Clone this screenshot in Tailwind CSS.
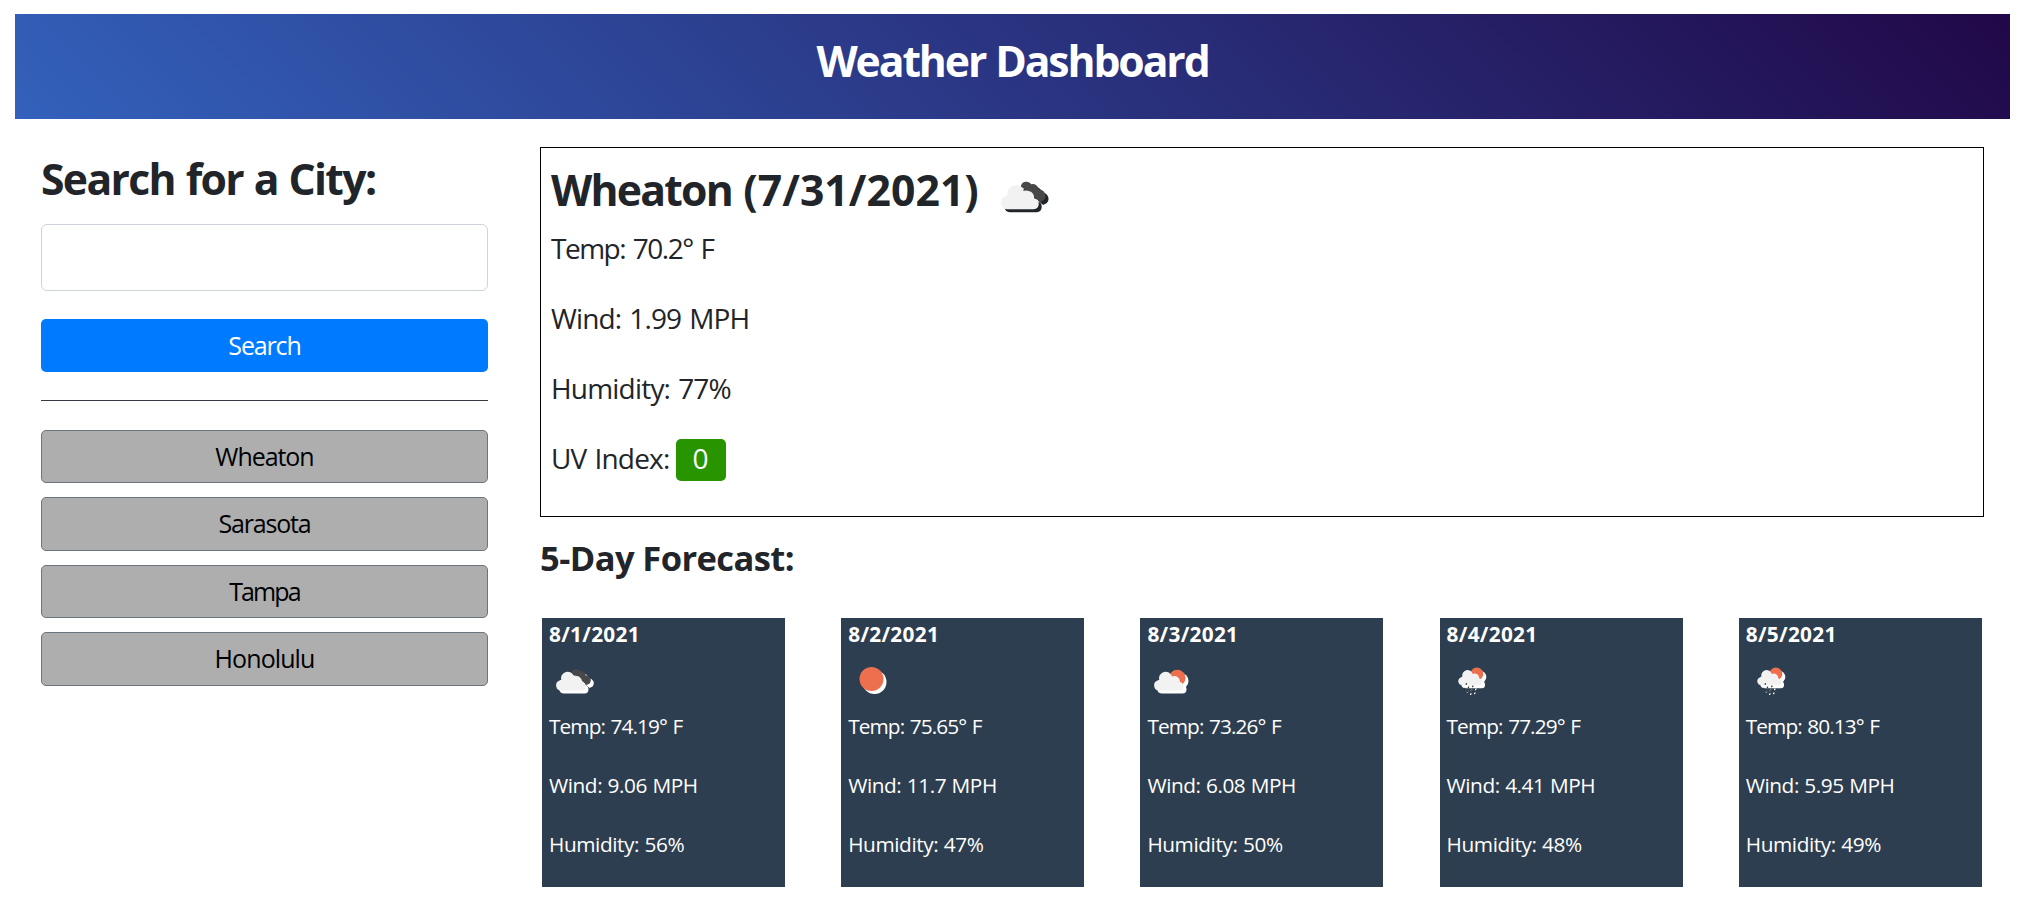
<!DOCTYPE html>
<html lang="en">
<head>
<meta charset="utf-8">
<title>Weather Dashboard</title>
<script src="https://cdn.jsdelivr.net/npm/@tailwindcss/browser@4"></script>
</head>
<body class="bg-white text-[#212529] font-['Open_Sans','Noto_Sans',sans-serif]">

<!-- Shared weather icon shapes -->
<svg class="hidden">
  <symbol id="cloud" viewBox="0 0 50 50">
    <path fill="#f2f2f2" d="M12.2 34.6a5.2 5.2 0 0 1-1.6-10.1c.7-.2 1.200-.4 1.700-.4a6.500 6.500 0 0 1 12.700-3.600 5.600 5.600 0 0 1 7.900 5.400 4.400 4.400 0 0 1-.3 8.700z"/>
  </symbol>
  <symbol id="broken" viewBox="0 0 50 50">
    <path fill="#484848" d="M22.500 16.800a4.600 4.600 0 0 1 8.300-1.800 4.800 4.800 0 0 1 5.700 4.200 5 5 0 0 1 4.100 8.200l-3 1.500-8-7z"/>
    <use href="#cloud" width="50" height="50"/>
  </symbol>
  <symbol id="sun" viewBox="0 0 50 50">
    <circle cx="23.500" cy="23" r="12" fill="#ee6f4d"/>
  </symbol>
  <symbol id="partly" viewBox="0 0 50 50">
    <circle cx="30.300" cy="22" r="8.200" fill="#ee6f4d"/>
    <use href="#cloud" width="50" height="50"/>
  </symbol>
  <symbol id="rain" viewBox="0 0 50 50">
    <circle cx="29.800" cy="18" r="6.500" fill="#ee6f4d"/>
    <g transform="translate(5.500 1.300) scale(.81)"><use href="#cloud" width="50" height="50"/></g>
    <g stroke="#3a3a3a" stroke-width="1.300" stroke-linecap="round">
      <path d="M19.500 27.700l-.4.6M17.700 32.400l-.4.6M21 34.800l-.4.600M21.700 31l-.4.600M25 34l-.4.600M26 30l-.4.600"/>
    </g>
  </symbol>
</svg>

<header class="ml-[15px] mr-[13px] mt-[14px] h-[105px] bg-[linear-gradient(45deg,#3361bb,#210848)] text-center text-white">
  <h1 class="pt-px text-[42.7px] font-bold leading-[91px] tracking-[-2.1px] [word-spacing:1px]">Weather Dashboard</h1>
</header>

<div class="flex gap-[52px] pl-[41px]">
  <aside class="w-[447px] shrink-0 pt-[28px]">
    <h2 class="text-[42.7px] font-bold leading-[64px] tracking-[-1.65px] [word-spacing:1.2px]">Search for a City:</h2>
    <input type="text" class="mt-[13px] block h-[67px] w-full rounded-[6px] border border-[#ced4da] px-4 text-[28px]">
    <button class="mt-[28px] flex h-[53px] w-full items-center justify-center rounded-[5px] bg-[#007bff] text-[25px] tracking-[-1.15px] text-white">Search</button>
    <div class="mt-[28px] h-px bg-[#343a40]"></div>
    <div class="mt-[29px] flex flex-col gap-[14px] text-[25px] text-black">
      <button class="h-[53.400px] rounded-[5px] border border-[#6c757d] bg-[#aeaeae] tracking-[-1.05px]">Wheaton</button>
      <button class="h-[53.400px] rounded-[5px] border border-[#6c757d] bg-[#aeaeae] tracking-[-1.16px]">Sarasota</button>
      <button class="h-[53.400px] rounded-[5px] border border-[#6c757d] bg-[#aeaeae] tracking-[-1.9px]">Tampa</button>
      <button class="h-[53.400px] rounded-[5px] border border-[#6c757d] bg-[#aeaeae] tracking-[-0.9px]">Honolulu</button>
    </div>
  </aside>

  <main class="w-[1444px] shrink-0 pt-[28px]">
    <section class="h-[370px] border border-black pl-[10px] pt-[10px]">
      <div class="flex h-[64px]">
        <h2 class="w-[441px] whitespace-nowrap text-[42.7px] font-bold leading-[64px] tracking-[0.05px]"><span class="tracking-[-1.75px]">Wheaton</span> (7/31/2021)</h2>
        <svg class="mt-[7px] size-[64px] [filter:drop-shadow(3px_3px_0.5px_currentColor)]"><use href="#broken"/></svg>
      </div>
      <div class="mt-[5px] flex flex-col gap-[28px] text-[28px] leading-[42px]">
        <p class="tracking-[-1.5px] [word-spacing:2px]">Temp: 70.2° F</p>
        <p class="tracking-[-0.85px] [word-spacing:1.5px]">Wind: 1.99 MPH</p>
        <p class="tracking-[-0.8px] [word-spacing:1.5px]">Humidity: 77%</p>
        <p class="flex tracking-[-0.8px] [word-spacing:1.5px]"><span class="w-[124.500px]">UV Index:</span><span class="mt-[2px] h-[42px] w-[50px] rounded-[5px] bg-[#289500] text-center leading-[38px] tracking-normal text-white">0</span></p>
      </div>
    </section>

    <h3 class="mt-[15.500px] text-[34.500px] font-bold leading-[50px] tracking-[-0.58px]">5-Day Forecast:</h3>

    <section class="ml-[2px] mt-[35.500px] flex gap-[56.200px] text-[20.800px] leading-[32px] text-white">
      <article class="h-[269px] w-[243px] bg-[#2d3e50] pl-[7px]">
        <h4 class="font-bold tracking-[0.3px]">8/1/2021</h4>
        <svg class="mt-[6px] size-[50px] [filter:drop-shadow(3px_3px_0.5px_currentColor)]"><use href="#broken"/></svg>
        <div class="mt-[4px] flex flex-col gap-[27px]">
          <p class="tracking-[-0.9px] [word-spacing:1px]">Temp: 74.19° F</p>
          <p class="tracking-[-0.45px] [word-spacing:0.5px]">Wind: 9.06 MPH</p>
          <p class="tracking-[-0.42px] [word-spacing:0.5px]">Humidity: 56%</p>
        </div>
      </article>
      <article class="h-[269px] w-[243px] bg-[#2d3e50] pl-[7px]">
        <h4 class="font-bold tracking-[0.3px]">8/2/2021</h4>
        <svg class="mt-[6px] size-[50px] [filter:drop-shadow(3px_3px_0.5px_currentColor)]"><use href="#sun"/></svg>
        <div class="mt-[4px] flex flex-col gap-[27px]">
          <p class="tracking-[-0.9px] [word-spacing:1px]">Temp: 75.65° F</p>
          <p class="tracking-[-0.45px] [word-spacing:0.5px]">Wind: 11.7 MPH</p>
          <p class="tracking-[-0.42px] [word-spacing:0.5px]">Humidity: 47%</p>
        </div>
      </article>
      <article class="h-[269px] w-[243px] bg-[#2d3e50] pl-[7px]">
        <h4 class="font-bold tracking-[0.3px]">8/3/2021</h4>
        <svg class="mt-[6px] size-[50px] [filter:drop-shadow(3px_3px_0.5px_currentColor)]"><use href="#partly"/></svg>
        <div class="mt-[4px] flex flex-col gap-[27px]">
          <p class="tracking-[-0.9px] [word-spacing:1px]">Temp: 73.26° F</p>
          <p class="tracking-[-0.45px] [word-spacing:0.5px]">Wind: 6.08 MPH</p>
          <p class="tracking-[-0.42px] [word-spacing:0.5px]">Humidity: 50%</p>
        </div>
      </article>
      <article class="h-[269px] w-[243px] bg-[#2d3e50] pl-[7px]">
        <h4 class="font-bold tracking-[0.3px]">8/4/2021</h4>
        <svg class="mt-[6px] size-[50px] [filter:drop-shadow(3px_3px_0.5px_currentColor)]"><use href="#rain"/></svg>
        <div class="mt-[4px] flex flex-col gap-[27px]">
          <p class="tracking-[-0.9px] [word-spacing:1px]">Temp: 77.29° F</p>
          <p class="tracking-[-0.45px] [word-spacing:0.5px]">Wind: 4.41 MPH</p>
          <p class="tracking-[-0.42px] [word-spacing:0.5px]">Humidity: 48%</p>
        </div>
      </article>
      <article class="h-[269px] w-[243px] bg-[#2d3e50] pl-[7px]">
        <h4 class="font-bold tracking-[0.3px]">8/5/2021</h4>
        <svg class="mt-[6px] size-[50px] [filter:drop-shadow(3px_3px_0.5px_currentColor)]"><use href="#rain"/></svg>
        <div class="mt-[4px] flex flex-col gap-[27px]">
          <p class="tracking-[-0.9px] [word-spacing:1px]">Temp: 80.13° F</p>
          <p class="tracking-[-0.45px] [word-spacing:0.5px]">Wind: 5.95 MPH</p>
          <p class="tracking-[-0.42px] [word-spacing:0.5px]">Humidity: 49%</p>
        </div>
      </article>
    </section>
  </main>
</div>
</body>
</html>
